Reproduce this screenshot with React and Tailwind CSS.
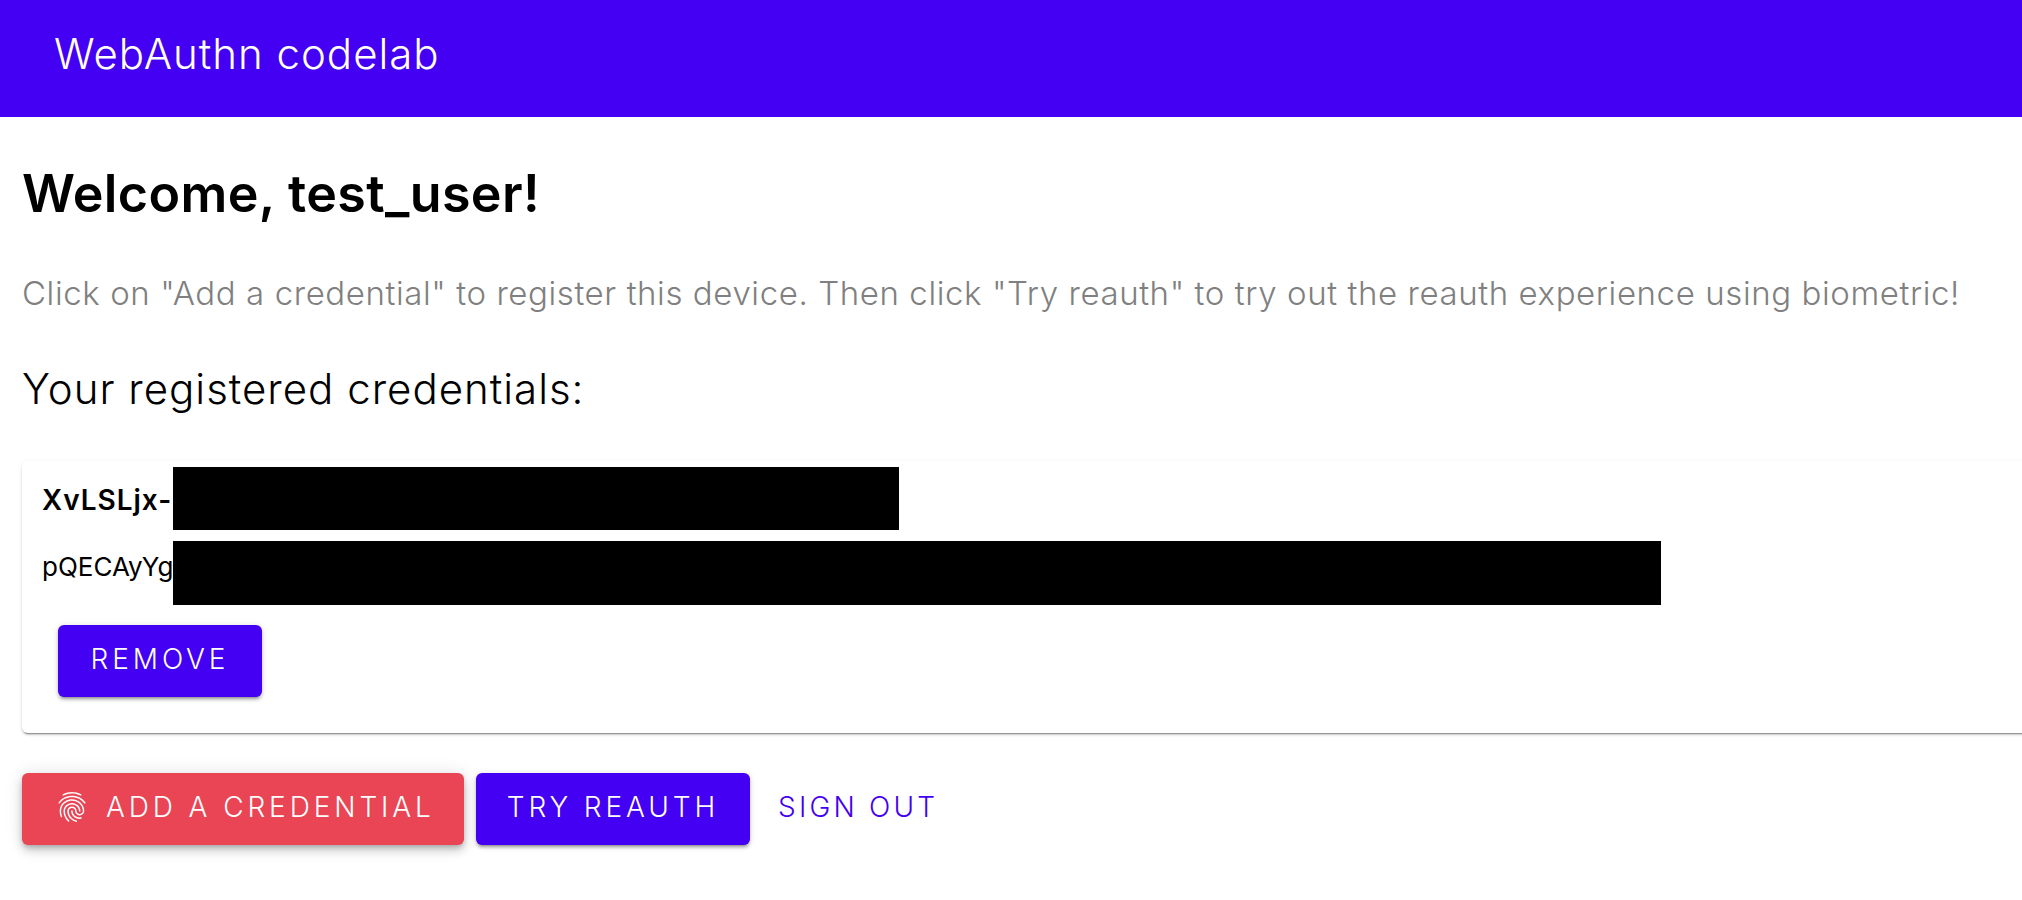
import { MdFingerprint } from "react-icons/md";

function RaisedButton({ children, className = "" }) {
  return (
    <button className={`flex h-[72px] items-center rounded-[6px] bg-[#4400f2] pb-[4px] text-[28px] font-light tracking-[3.9px] text-white shadow-[0_4px_2px_-3px_rgba(0,0,0,0.25),0_3px_3px_0_rgba(0,0,0,0.18),0_1px_7px_0_rgba(0,0,0,0.14)] ${className}`}>
      {children}
    </button>
  );
}

export default function App() {
  return (
    <div className="h-[900px] w-full overflow-hidden bg-white font-['Inter','Noto_Sans',sans-serif] text-black">
      {/* Top bar */}
      <header className="flex h-[117px] items-start bg-[#4400f2] pl-[54px] pt-[24px] text-[42px] font-light leading-[60px] tracking-[1px] text-white">
        WebAuthn codelab
      </header>

      <main className="px-[22px]">
        <h1 className="mt-[44px] text-[52px] font-semibold leading-[66px] tracking-[0.35px]">Welcome, test_user!</h1>
        <p className="mt-[42px] whitespace-nowrap text-[33px] font-light leading-[48px] tracking-[0.59px] text-[#808080]">
          Click on "Add a credential" to register this device. Then click "Try reauth" to try out the reauth experience using biometric!
        </p>
        <h2 className="mt-[42px] text-[42px] font-light leading-[60px] tracking-[1px]">Your registered credentials:</h2>

        {/* Credential card */}
        <section className="mr-[-40px] mt-[42px] h-[272px] rounded-[6px] bg-white pt-[6px] shadow-[0_3px_1px_-2px_rgba(0,0,0,0.3),0_2px_2px_0_rgba(0,0,0,0.16),0_1px_5px_0_rgba(0,0,0,0.08)]">
          <div className="flex h-[63px]">
            <span className="w-[151px] overflow-hidden whitespace-nowrap pl-[20px] text-[28px] font-semibold leading-[66px] tracking-[1px]">XvLSLjx-</span>
            <div className="w-[726px] bg-black" />
          </div>
          <div className="mt-[11px] flex h-[64px]">
            <span className="w-[151px] overflow-hidden whitespace-nowrap pl-[20px] text-[26px] leading-[52px]">pQECAyYg</span>
            <div className="w-[1488px] bg-black" />
          </div>
          <RaisedButton className="ml-[36px] mt-[20px] w-[204px] justify-center">REMOVE</RaisedButton>
        </section>

        {/* Actions */}
        <div className="mt-[40px] flex items-center">
          <RaisedButton className="w-[442px] !bg-[#ea4555] pl-[32px] !shadow-[0_3px_5px_-1px_rgba(0,0,0,0.2),0_6px_10px_0_rgba(0,0,0,0.14),0_1px_18px_0_rgba(0,0,0,0.12)]">
            <MdFingerprint size={36} className="mr-[16px]" />
            ADD A CREDENTIAL
          </RaisedButton>
          <RaisedButton className="ml-[12px] w-[274px] justify-center">TRY REAUTH</RaisedButton>
          <button className="ml-[28px] pb-[4px] text-[28px] font-light tracking-[3.2px] text-[#4400f2]">SIGN OUT</button>
        </div>
      </main>
    </div>
  );
}
